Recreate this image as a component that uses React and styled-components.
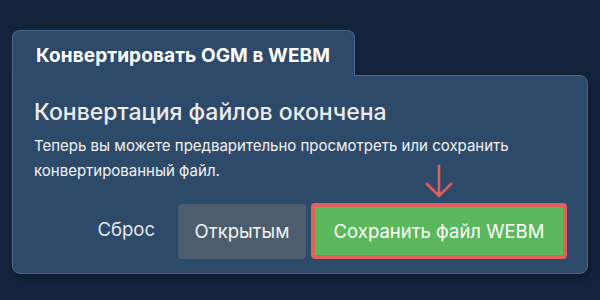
import React from "react";
import styled, { createGlobalStyle } from "styled-components";

const GlobalStyle = createGlobalStyle`
  html, body {
    margin: 0;
    padding: 0;
    background: #12233a;
  }
  body {
    font-family: Inter, "Noto Sans", "Liberation Sans", sans-serif;
  }
`;

const App = () => {
  return (
    <Page>
      <GlobalStyle />
      <Card>
        <Tab>Конвертировать OGM в WEBM</Tab>
        <Panel>
          <Heading>Конвертация файлов окончена</Heading>
          <Text>
            Теперь вы можете предварительно просмотреть или сохранить
            конвертированный файл.
          </Text>
          <Actions>
            <ResetButton>Сброс</ResetButton>
            <OpenButton>Открытым</OpenButton>
            <SaveWrap>
              <Arrow width="30" height="34" viewBox="0 0 30 34">
                <path
                  d="M15 1 V32 M2 19 L15 32 L28 19"
                  fill="none"
                  stroke="#e0605a"
                  strokeWidth="2.6"
                />
              </Arrow>
              <SaveButton>Сохранить файл WEBM</SaveButton>
            </SaveWrap>
          </Actions>
        </Panel>
      </Card>
    </Page>
  );
};

const Page = styled.div`
  width: 600px;
  height: 300px;
  padding: 30px 0 0 12px;
  box-sizing: border-box;
`;

const Card = styled.div`
  width: 576px;
  display: flex;
  flex-direction: column;
`;

const Tab = styled.div`
  position: relative;
  z-index: 1;
  width: 343px;
  height: 46px;
  margin-bottom: -1px;
  box-sizing: border-box;
  padding: 13px 0 0 23px;
  background: #2e4a6b;
  border: 1px solid #4b6787;
  border-bottom: none;
  border-radius: 8px 8px 0 0;
  color: #ffffff;
  font-weight: 700;
  font-size: 19px;
  letter-spacing: 0.1px;
`;

const Panel = styled.div`
  height: 199px;
  box-sizing: border-box;
  padding: 22px 20px 0 21px;
  background: #2e4a6b;
  border: 1px solid #4b6787;
  border-radius: 0 8px 8px 8px;
  box-shadow: 3px 3px 6px rgba(0, 0, 0, 0.25);
  display: flex;
  flex-direction: column;
`;

const Heading = styled.div`
  color: #ececec;
  font-size: 23px;
  font-weight: 500;
  line-height: 28px;
`;

const Text = styled.div`
  margin-top: 7px;
  color: #f2f2f2;
  font-size: 15px;
  line-height: 25px;
  max-width: 500px;
`;

const Actions = styled.div`
  margin-top: 20px;
  display: flex;
  justify-content: flex-end;
  align-items: center;
`;

const ResetButton = styled.button`
  border: none;
  background: none;
  color: #e6e6e6;
  font-family: inherit;
  font-size: 18.5px;
  padding: 0 22px 4px 0;
  margin-right: 1px;
`;

const OpenButton = styled.button`
  width: 128px;
  height: 55px;
  border: none;
  border-radius: 4px;
  background: #4c5e6e;
  color: #f2f2f2;
  font-family: inherit;
  font-size: 18.5px;
`;

const SaveWrap = styled.div`
  position: relative;
  margin-left: 5px;
`;

const Arrow = styled.svg`
  position: absolute;
  left: 113px;
  top: -39px;
`;

const SaveButton = styled.button`
  width: 256px;
  height: 56px;
  box-sizing: border-box;
  border: 4px solid #e0605a;
  border-radius: 4px;
  background: #5cb85c;
  color: #ffffff;
  font-family: inherit;
  font-size: 18.5px;
  display: block;
`;

export default App;
